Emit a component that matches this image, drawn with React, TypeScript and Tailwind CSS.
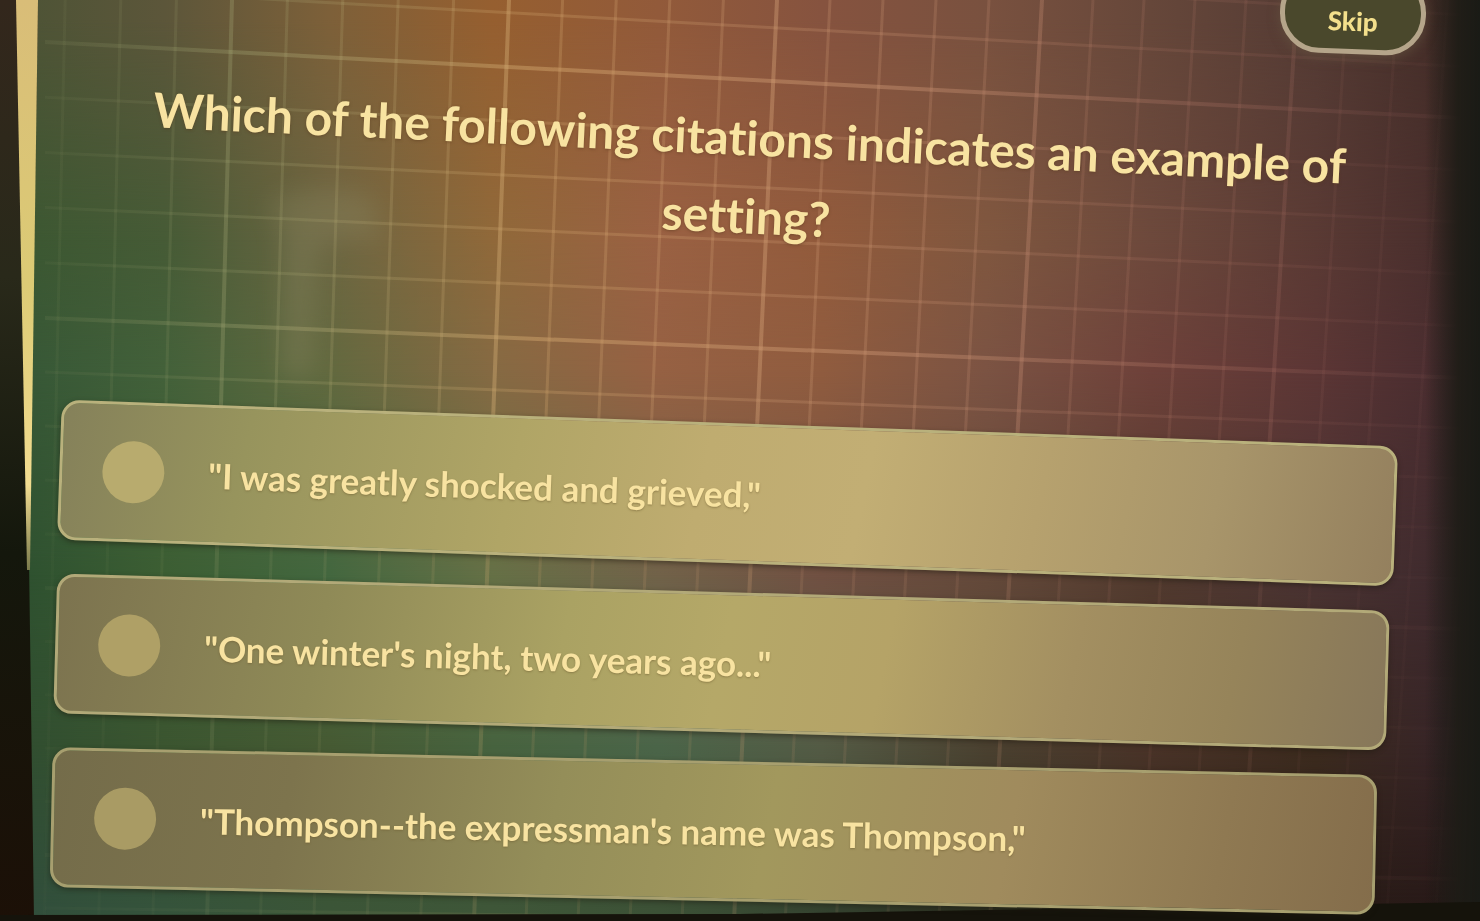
import { clsx } from "clsx";

const answers = [
  {
    text: '"I was greatly shocked and grieved,"',
    card: "ml-2 rotate-[2deg] border-[#b9b17c] bg-[linear-gradient(100deg,#85815a_0%,#97945d_14%,#b0a566_34%,#bfac70_48%,#c2ae74_60%,#b6a16e_73%,#a8956a_86%,#94805e_100%)]",
    radio: "bg-[#b8ab6e]",
  },
  {
    text: '"One winter\'s night, two years ago..."',
    card: "ml-1 mr-2 rotate-[1.6deg] border-[#b2a978] bg-[linear-gradient(100deg,#7c734f_0%,#8f8a57_20%,#aaa263_38%,#b5a868_50%,#b5a367_62%,#a38f61_76%,#96845a_88%,#87775a_100%)]",
    radio: "bg-[#afa066]",
  },
  {
    text: '"Thompson--the expressman\'s name was Thompson,"',
    card: "mr-5 rotate-[1.2deg] border-[#a79f6f] bg-[linear-gradient(100deg,#746c4a_0%,#7d744d_18%,#948e59_38%,#a2985d_54%,#a08b5d_72%,#8f7952_88%,#846d4b_100%)]",
    radio: "bg-[#a99b64]",
  },
];

// Colour bands of the backdrop, each one fades in from the band above it
const bands = [
  { y: 20, colors: ["#4b5335", "#5c563a", "#7d6039", "#965f30", "#925a3a", "#86533f", "#79513f", "#66473a", "#543b34", "#3f2924"] },
  { y: 240, colors: ["#3a5731", "#465b36", "#6c6642", "#90693a", "#9a6143", "#925b3c", "#80573f", "#6d493c", "#5a3a34", "#432a2a"] },
  { y: 370, colors: ["#355636", "#43613a", "#62693f", "#866a43", "#966143", "#905c3f", "#7b5343", "#6e413a", "#5c3635", "#432a2e"] },
  { y: 575, colors: ["#2c4f2f", "#3c5e33", "#43673f", "#657046", "#716249", "#705042", "#64493a", "#513a2e", "#4a3333", "#3b272b"] },
  { y: 745, colors: ["#2f4d30", "#3b5530", "#465a33", "#47633f", "#4b6549", "#545b45", "#4b4130", "#4a3328", "#3c2b1e", "#35222a"] },
  { y: 905, colors: ["#304d3b", "#35533b", "#3b5537", "#3e5638", "#3c5136", "#354330", "#2b2f20", "#282318", "#291d17", "#281818"] },
];

const verticals = [
  [-46, -64],
  [232, 207],
  [509, 474],
  [777, 734],
  [1042, 990],
  [1297, 1240],
  [1548, 1484],
];

const horizontals = [
  [-235, -140],
  [42, 118],
  [318, 378],
  [588, 629],
  [855, 879],
  [1120, 1128],
];

function lines(majors: number[][]) {
  return majors.slice(0, -1).flatMap(([a, b], i) => {
    const [c, d] = majors[i + 1];
    return [0, 1, 2, 3, 4].map((n) => ({
      from: a + ((c - a) * n) / 5,
      to: b + ((d - b) * n) / 5,
      major: n === 0,
    }));
  });
}

function Backdrop() {
  return (
    <svg
      className="absolute inset-0 -z-10 h-full w-full"
      viewBox="0 0 1480 921"
      preserveAspectRatio="none"
      aria-hidden="true"
    >
      <defs>
        {bands.map((band, i) => (
          <g key={band.y}>
            <linearGradient id={`band-${i}`}>
              {band.colors.map((color, n) => (
                <stop key={n} offset={n / 9} stopColor={color} />
              ))}
            </linearGradient>
            <linearGradient
              id={`fade-${i}`}
              gradientUnits="userSpaceOnUse"
              x1="0"
              x2="0"
              y1={i ? bands[i - 1].y : -1}
              y2={i ? band.y : 0}
            >
              <stop offset="0" stopColor="#fff" stopOpacity="0" />
              <stop offset="1" stopColor="#fff" />
            </linearGradient>
            <mask id={`mask-${i}`} maskUnits="userSpaceOnUse" x="0" y="0" width="1480" height="921">
              <rect width="1480" height="921" fill={`url(#fade-${i})`} />
            </mask>
          </g>
        ))}
        <linearGradient id="line-fade" gradientUnits="userSpaceOnUse" x1="38" x2="1460" y1="0" y2="0">
          <stop offset="0" stopColor="#9aa070" stopOpacity="0.25" />
          <stop offset="0.15" stopColor="#a9ac78" stopOpacity="0.7" />
          <stop offset="0.35" stopColor="#d5a970" />
          <stop offset="0.6" stopColor="#d09a78" stopOpacity="0.9" />
          <stop offset="0.85" stopColor="#b5786a" stopOpacity="0.5" />
          <stop offset="1" stopColor="#8a5a58" stopOpacity="0.25" />
        </linearGradient>
        <linearGradient id="line-dim" gradientUnits="userSpaceOnUse" x1="0" x2="0" y1="0" y2="921">
          <stop offset="0.45" stopColor="#fff" />
          <stop offset="0.6" stopColor="#fff" stopOpacity="0.6" />
          <stop offset="1" stopColor="#fff" stopOpacity="0.4" />
        </linearGradient>
        <mask id="line-mask" maskUnits="userSpaceOnUse" x="0" y="0" width="1480" height="921">
          <rect width="1480" height="921" fill="url(#line-dim)" />
        </mask>
        <linearGradient id="edge-right">
          <stop offset="0" stopColor="#191a14" stopOpacity="0" />
          <stop offset="0.6" stopColor="#1d1c16" stopOpacity="0.9" />
          <stop offset="1" stopColor="#1a1b16" />
        </linearGradient>
        <linearGradient id="edge-left" x1="0" x2="0" y1="0" y2="1">
          <stop offset="0" stopColor="#33271c" />
          <stop offset="0.3" stopColor="#29291a" />
          <stop offset="0.6" stopColor="#14170c" />
          <stop offset="1" stopColor="#1c1007" />
        </linearGradient>
        <linearGradient id="strip" x1="0" x2="0" y1="0" y2="1">
          <stop offset="0" stopColor="#d9bd78" />
          <stop offset="0.5" stopColor="#dccb75" />
          <stop offset="0.85" stopColor="#f2dc90" />
          <stop offset="1" stopColor="#7b7b4c" />
        </linearGradient>
        <filter id="soft" x="-50%" y="-50%" width="200%" height="200%">
          <feGaussianBlur stdDeviation="12" />
        </filter>
      </defs>

      {bands.map((band, i) => (
        <rect key={band.y} width="1480" height="921" fill={`url(#band-${i})`} mask={`url(#mask-${i})`} />
      ))}
      <path d="M268 205q40-25 105-8l8 45q-50-12-62 10l-6 125h-32l2-145z" fill="#8c8660" opacity="0.35" filter="url(#soft)" />

      <g fill="url(#line-fade)" mask="url(#line-mask)">
        {lines(verticals).map(({ from, to, major }) => {
          const w = major ? 4 : 3;
          return (
            <polygon
              key={from}
              points={`${from - w / 2},0 ${from + w / 2},0 ${to + w / 2},921 ${to - w / 2},921`}
              opacity={major ? 0.45 : 0.27}
            />
          );
        })}
        {lines(horizontals).map(({ from, to, major }) => {
          const w = major ? 4 : 3;
          return (
            <polygon
              key={from}
              points={`45,${from - w / 2} 1460,${to - w / 2} 1460,${to + w / 2} 45,${from + w / 2}`}
              opacity={major ? 0.45 : 0.27}
            />
          );
        })}
      </g>

      <rect x="1425" width="55" height="921" fill="url(#edge-right)" />
      <path d="M0 0H38L29 560L34 921H0Z" fill="url(#edge-left)" />
      <path d="M16 0H38L30 570H27Z" fill="url(#strip)" />
      <path d="M0 915L740 914L1480 902V921H0Z" fill="#15130b" />
    </svg>
  );
}

export default function App() {
  return (
    <main className="relative isolate flex min-h-screen flex-col overflow-hidden font-['Lato',sans-serif] text-[#f8e3a1] [font-variant-ligatures:none]">
      <Backdrop />

      <header className="flex justify-end pr-[54px]">
        <button
          type="button"
          className="-mt-7 flex h-[82px] w-[146px] rotate-2 items-center justify-center rounded-[40px] border-5 border-[#b5a58a] bg-[#4a482c] pt-4 text-[26px] font-black text-[#f3df8c] shadow-[0_4px_12px_#6b5b4480]"
        >
          Skip
        </button>
      </header>

      <form className="flex flex-1 flex-col">
        <h1 className="mt-11 rotate-[2.7deg] pr-12 pl-16 text-center text-[48px] leading-[78px] font-bold [text-shadow:0_1px_3px_#5a3a1e80]">
          Which of the following citations indicates an example of setting?
        </h1>

        <div
          role="radiogroup"
          aria-label="Answers"
          className="mt-[169px] flex flex-col gap-[29px] pr-[84px] pb-5 pl-[51px]"
        >
          {answers.map((answer) => (
            <label
              key={answer.text}
              className={clsx(
                "flex min-h-[140px] cursor-pointer items-center gap-11 rounded-[18px] border-3 px-10 shadow-[0_2px_5px_#1e1a1080]",
                answer.card,
              )}
            >
              <input
                type="radio"
                name="answer"
                className={clsx("size-[62px] shrink-0 appearance-none rounded-full", answer.radio)}
              />
              <span className="text-[35px] font-bold [text-shadow:0_1px_2px_#6b5a2e80]">{answer.text}</span>
            </label>
          ))}
        </div>
      </form>
    </main>
  );
}
